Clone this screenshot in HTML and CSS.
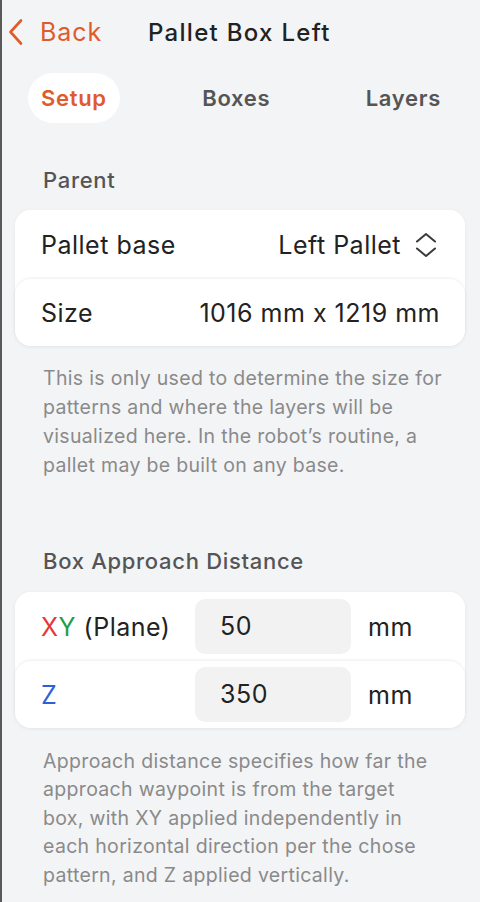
FILE: index.html
```html
<!DOCTYPE html>
<html>
<head>
<meta charset="utf-8">
<link rel="stylesheet" href="styles.css">
</head>
<body>
<div class="page">
  <header class="header">
    <a class="back">
      <svg class="back-icon" width="18" height="28" viewBox="0 0 18 28"><path d="M14 2.5 L3.5 14 L14 25.5" fill="none" stroke="#e05a2b" stroke-width="2.6" stroke-linecap="round" stroke-linejoin="round"/></svg>
      <span>Back</span>
    </a>
    <h1 class="title">Pallet Box Left</h1>
  </header>

  <nav class="tabs">
    <span class="tab active">Setup</span>
    <span class="tab">Boxes</span>
    <span class="tab">Layers</span>
  </nav>

  <h2 class="section-label">Parent</h2>
  <div class="card">
    <div class="row first">
      <span class="row-label">Pallet base</span>
      <span class="row-value">Left Pallet
        <svg class="updown" width="22" height="26" viewBox="0 0 22 26"><path d="M2 9.5 L11 2 L20 9.5 M2 16.5 L11 24 L20 16.5" fill="none" stroke="#3a3a3a" stroke-width="2" stroke-linecap="round" stroke-linejoin="round"/></svg>
      </span>
    </div>
    <div class="row">
      <span class="row-label">Size</span>
      <span class="row-value">1016 mm x 1219 mm</span>
    </div>
  </div>
  <p class="help">This is only used to determine the size for patterns and where the layers will be visualized here. In the robot’s routine, a pallet may be built on any base.</p>

  <h2 class="section-label second">Box Approach Distance</h2>
  <div class="card">
    <div class="row first input-row">
      <span class="row-label axis"><span class="x">X</span><span class="y">Y</span> (Plane)</span>
      <span class="field">50</span>
      <span class="unit">mm</span>
    </div>
    <div class="row input-row">
      <span class="row-label axis"><span class="z">Z</span></span>
      <span class="field">350</span>
      <span class="unit">mm</span>
    </div>
  </div>
  <p class="help help2">Approach distance specifies how far the approach waypoint is from the target box, with XY applied independently in each horizontal direction per the chose pattern, and Z applied vertically.</p>
</div>
</body>
</html>
```

FILE: styles.css
```css
html, body {
  margin: 0;
  padding: 0;
}
body {
  background: #f3f4f6;
  font-family: Inter, "Noto Sans", sans-serif;
  border-left: 2px solid #5a5a5a;
  min-height: 902px;
  box-sizing: border-box;
  overflow: hidden;
}
.page {
  padding: 12px 15px 0 13px;
}
.header {
  display: flex;
  align-items: center;
  height: 40px;
}
.back {
  display: flex;
  align-items: center;
  color: #e05a2b;
  font-size: 25px;
  font-weight: 400;
  letter-spacing: 0.9px;
}
.back-icon {
  margin-left: -8px;
  margin-right: 15px;
}
.title {
  margin: 0 0 0 46px;
  font-size: 24px;
  font-weight: 500;
  color: #222;
  letter-spacing: 1.3px;
}
.tabs {
  display: flex;
  justify-content: space-between;
  margin: 21px 11px 0 13px;
}
.tab {
  height: 50px;
  line-height: 50px;
  padding: 0 13px;
  border-radius: 25px;
  font-size: 22px;
  font-weight: 600;
  letter-spacing: 0.7px;
  color: #555;
}
.tab.active {
  background: #fff;
  color: #e05a2b;
}
.section-label {
  margin: 45px 0 0 28px;
  font-size: 22px;
  line-height: 24px;
  font-weight: 500;
  letter-spacing: 0.7px;
  color: #555;
}
.section-label.second {
  margin-top: 69px;
}
.card {
  margin-top: 18px;
  background: #fff;
  border-radius: 16px;
  box-shadow: 0 1px 4px rgba(0,0,0,0.06);
}
.section-label.second + .card {
  margin-top: 19px;
}
.row {
  display: flex;
  align-items: center;
  justify-content: space-between;
  height: 67px;
  padding: 0 25px 0 26px;
  border-radius: 16px;
  background: #fff;
  font-size: 25px;
  letter-spacing: 0.5px;
  color: #222;
}
.row.first {
  height: 69px;
}
.row + .row {
  box-shadow: 0 -1px 3px rgba(0,0,0,0.07);
}
.row-value {
  display: flex;
  align-items: center;
}
.updown {
  margin-left: 14px;
  margin-right: 3px;
}
.help {
  margin: 18px 0 0 28px;
  width: 404px;
  font-size: 19.5px;
  line-height: 29px;
  letter-spacing: 0.32px;
  color: #8a8a8a;
}
.help2 {
  margin-top: 19px;
  width: 395px;
  line-height: 28.4px;
}
.input-row {
  justify-content: flex-start;
  padding-right: 0;
}
.axis {
  width: 154px;
}
.x { color: #e53935; }
.y { color: #1e9e4a; }
.z { color: #2f5fd8; }
.field {
  width: 131px;
  height: 55px;
  line-height: 55px;
  padding-left: 25px;
  background: #f2f2f3;
  border-radius: 10px;
}
.unit {
  margin-left: 17px;
}
```
